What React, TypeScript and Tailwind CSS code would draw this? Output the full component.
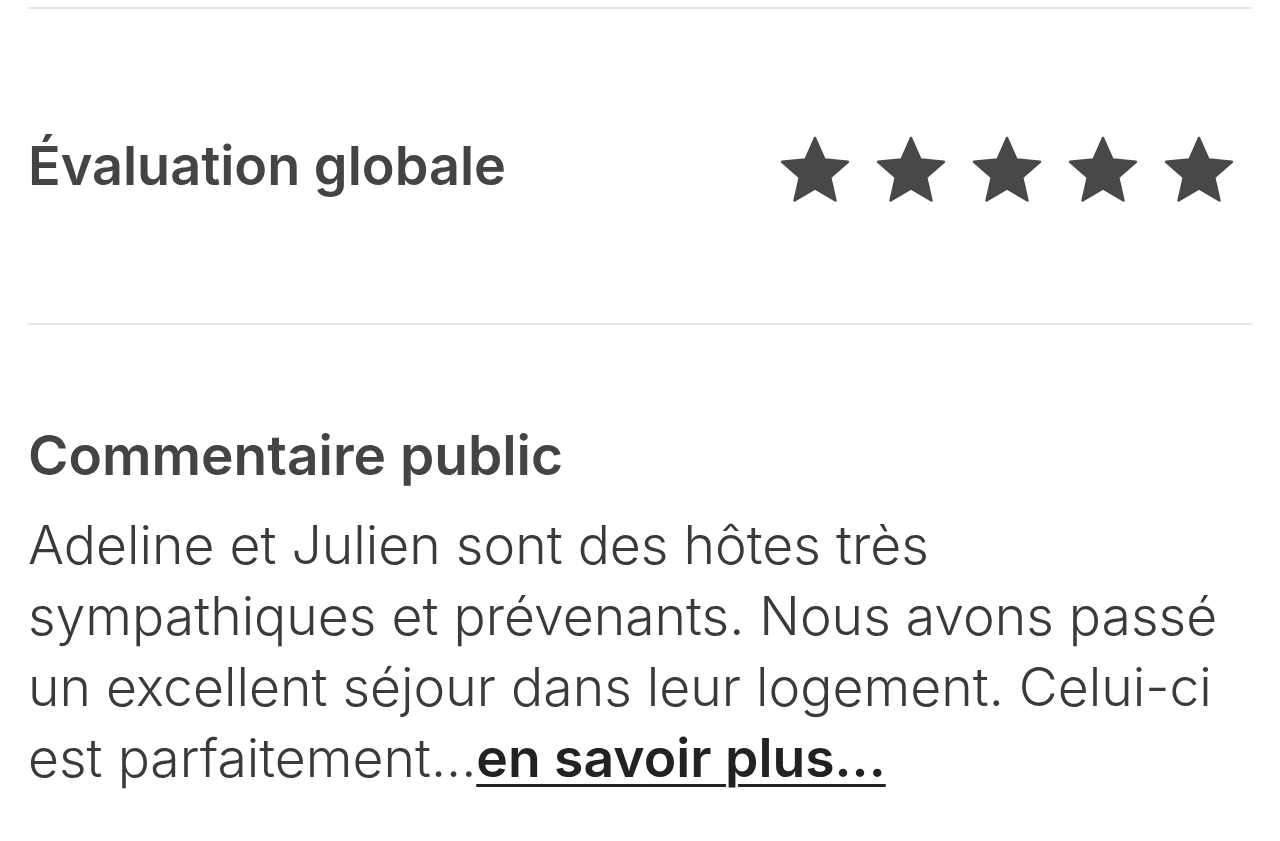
export default function App() {
  const stars = [0, 1, 2, 3, 4];
  return (
    <div className="min-h-screen bg-white px-[28px] pt-[7px] text-[#444]" style={{ fontFamily: 'Inter, "Noto Sans", sans-serif' }}>
      <div className="border-t-2 border-[#e6e6e6]" />

      {/* Overall rating */}
      <div className="flex h-[314px] items-center justify-between">
        <h2 className="text-[54px] font-semibold leading-none">Évaluation globale</h2>
        <div className="flex items-center gap-[20px] pr-[15px] pt-[8px]">
          {stars.map((i) => (
            <svg key={i} width="76" height="75" viewBox="0 0 24 24" className="fill-[#484848]">
              <path
                d="M12 1.6l3.05 6.9 7.5.72-5.66 5 1.66 7.37L12 17.75l-6.55 3.84 1.66-7.37-5.66-5 7.5-.72z"
                stroke="#484848"
                strokeWidth="0.8"
                strokeLinejoin="round"
              />
            </svg>
          ))}
        </div>
      </div>

      <div className="border-t-2 border-[#e6e6e6]" />

      {/* Public comment */}
      <div className="pt-[95px]">
        <h3 className="text-[55px] font-semibold leading-[71px]">Commentaire public</h3>
        <p className="mt-[18px] text-[53.5px] font-light leading-[71px] text-[#3a3a3a]">
          Adeline et Julien sont des hôtes très
          <br />
          sympathiques et prévenants. Nous avons passé
          <br />
          un excellent séjour dans leur logement. Celui-ci
          <br />
          est parfaitement...
          <a href="#" className="font-semibold text-[#222] underline decoration-[3px] underline-offset-[7px]">
            en savoir plus...
          </a>
        </p>
      </div>
    </div>
  );
}
